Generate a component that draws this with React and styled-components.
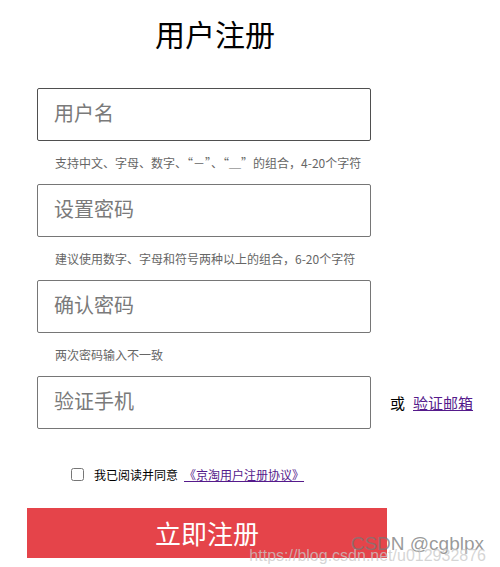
import React from 'react';
import styled, { createGlobalStyle } from 'styled-components';

const GlobalStyle = createGlobalStyle`
  html, body {
    margin: 0;
    padding: 0;
    background: #fff;
  }
  body {
    font-family: "Noto Sans CJK SC", "Liberation Sans", sans-serif;
  }
`;

const Page = styled.div`
  position: relative;
  width: 500px;
  height: 567px;
  overflow: hidden;
  padding-top: 18px;
  box-sizing: border-box;
`;

const Title = styled.h1`
  width: 430px;
  margin: 0;
  text-align: center;
  font-size: 30px;
  line-height: 30px;
  font-weight: 400;
  color: #000;
`;

const Form = styled.form`
  margin-top: 40px;
  display: flex;
  flex-direction: column;
`;

const Field = styled.div`
  display: flex;
  align-items: center;
  padding-left: 37px;
`;

const TextInput = styled.input`
  width: 334px;
  height: 53px;
  box-sizing: border-box;
  border: 1px solid ${(p) => (p.$active ? '#4f4f4f' : '#767676')};
  border-radius: 2px;
  padding: 0 0 4px 16px;
  font-family: inherit;
  font-size: 20px;
  color: #333;
  outline: none;

  &::placeholder {
    color: #7a7a7a;
  }
`;

const Hint = styled.p`
  margin: 0;
  height: 43px;
  line-height: 43px;
  padding-left: 55px;
  font-size: 12px;
  color: #666;
`;

// full-width quote marks, as the reference shows them
const Quote = styled.span`
  font-feature-settings: "fwid" 1;
`;

const Or = styled.span`
  margin-left: 19px;
  font-size: 15px;
  color: #000;
`;

const Link = styled.a`
  color: #551a8b;
  text-decoration: underline;
  font-size: ${(p) => p.$size || 15}px;
  margin-left: ${(p) => p.$gap || 0}px;
  cursor: pointer;
`;

const AgreeRow = styled.label`
  display: flex;
  align-items: center;
  height: 20px;
  margin-top: 35px;
  padding-left: 71px;
  font-size: 12px;
  color: #000;
`;

const Checkbox = styled.input`
  width: 13px;
  height: 13px;
  margin: 0 10px 0 0;
`;

const SubmitButton = styled.button`
  margin: 24px 0 0 27px;
  width: 360px;
  height: 50px;
  border: none;
  background: #e5444a;
  color: #fff;
  font-family: inherit;
  font-size: 26px;
  line-height: 50px;
  padding: 0;
  cursor: pointer;
`;

const Watermark = styled.div`
  position: absolute;
  right: ${(p) => p.$right}px;
  top: ${(p) => p.$top}px;
  font-family: "Liberation Sans", Arial, sans-serif;
  font-size: ${(p) => p.$size}px;
  color: ${(p) => p.$color};
  white-space: nowrap;
  pointer-events: none;
`;

export default function App() {
  return (
    <>
      <GlobalStyle />
      <Page>
        <Title>用户注册</Title>
        <Form onSubmit={(e) => e.preventDefault()}>
          <Field>
            <TextInput $active placeholder="用户名" />
          </Field>
          <Hint>
            支持中文、字母、数字、<Quote>“-”</Quote>、<Quote>“_”</Quote>的组合，4-20个字符
          </Hint>
          <Field>
            <TextInput type="password" placeholder="设置密码" />
          </Field>
          <Hint>建议使用数字、字母和符号两种以上的组合，6-20个字符</Hint>
          <Field>
            <TextInput type="password" placeholder="确认密码" />
          </Field>
          <Hint>两次密码输入不一致</Hint>
          <Field>
            <TextInput placeholder="验证手机" />
            <Or>或</Or>
            <Link $gap={8}>验证邮箱</Link>
          </Field>
          <AgreeRow>
            <Checkbox type="checkbox" />
            我已阅读并同意
            <Link $size={12} $gap={6}>《京淘用户注册协议》</Link>
          </AgreeRow>
          <SubmitButton type="submit">立即注册</SubmitButton>
        </Form>
        <Watermark $right={16} $top={533} $size={19} $color="rgba(120,120,120,0.75)">
          CSDN @cgblpx
        </Watermark>
        <Watermark $right={14} $top={547} $size={16} $color="rgba(200,200,200,0.75)">
          https://blog.csdn.net/u012932876
        </Watermark>
      </Page>
    </>
  );
}
